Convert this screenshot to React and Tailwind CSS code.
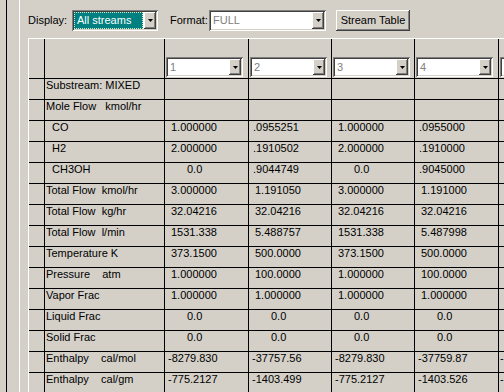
import React from 'react';

const sunken = 'shadow-[inset_1px_1px_0_#808080,inset_-1px_-1px_0_#ffffff,inset_2px_2px_0_#404040,inset_-2px_-2px_0_#d4d0c8]';
const raised = 'shadow-[inset_-1px_-1px_0_#404040,inset_1px_1px_0_#ffffff,inset_-2px_-2px_0_#808080]';

const colWidths = ['w-[84px]', 'w-[83px]', 'w-[83px]', 'w-[84px]', 'w-[84px]'];
const empty = ['', '', '', '', ''];

// last column is cut by the window edge, only the minus signs show
const rows = [
    { label: 'Substream: MIXED', vals: empty },
    { label: 'Mole Flow   kmol/hr', vals: empty },
    { label: 'CO', indent: true, vals: ['1.000000', '.0955251', '1.000000', '.0955000', ''] },
    { label: 'H2', indent: true, vals: ['2.000000', '.1910502', '2.000000', '.1910000', ''] },
    { label: 'CH3OH', indent: true, vals: ['0.0', '.9044749', '0.0', '.9045000', ''] },
    { label: 'Total Flow  kmol/hr', vals: ['3.000000', '1.191050', '3.000000', '1.191000', ''] },
    { label: 'Total Flow  kg/hr', vals: ['32.04216', '32.04216', '32.04216', '32.04216', ''] },
    { label: 'Total Flow  l/min', vals: ['1531.338', '5.488757', '1531.338', '5.487998', ''] },
    { label: 'Temperature K', vals: ['373.1500', '500.0000', '373.1500', '500.0000', ''] },
    { label: 'Pressure    atm', vals: ['1.000000', '100.0000', '1.000000', '100.0000', ''] },
    { label: 'Vapor Frac', vals: ['1.000000', '1.000000', '1.000000', '1.000000', ''] },
    { label: 'Liquid Frac', vals: ['0.0', '0.0', '0.0', '0.0', ''] },
    { label: 'Solid Frac', vals: ['0.0', '0.0', '0.0', '0.0', ''] },
    { label: 'Enthalpy    cal/mol', vals: ['-8279.830', '-37757.56', '-8279.830', '-37759.87', '-'] },
    { label: 'Enthalpy    cal/gm', vals: ['-775.2127', '-1403.499', '-775.2127', '-1403.526', '-'] },
];

function padFor(v, i) {
    if (i === 4) return 'pl-[1px]';
    if (v.startsWith('-')) return 'pl-[3px]';
    if (v.startsWith('.')) return 'pl-[4px]';
    if (v === '0.0') return 'pl-[22px]';
    return 'pl-[6px]';
}

function Arrow() {
    return (
        <svg width="5" height="3" viewBox="0 0 5 3">
            <polygon points="0,0 5,0 2.5,3" fill="#000" />
        </svg>
    );
}

function Combo({ text, width, height = 'h-[20px]', selected }) {
    return (
        <div className={`flex flex-none bg-white p-[2px] ${sunken} ${width} ${height}`}>
            <div className="flex min-w-0 flex-1 items-center">
                {selected ? (
                    <div className="flex h-full flex-1 items-center border border-dotted border-[#d8e8c0] bg-[#008080] pl-[2px] text-white">
                        {text}
                    </div>
                ) : (
                    <span className="pl-[2px] text-[#808080]">{text}</span>
                )}
            </div>
            <div className={`ml-[1px] flex w-[12px] flex-none items-center justify-center bg-[#d4d0c8] ${raised}`}>
                <Arrow />
            </div>
        </div>
    );
}

function App() {
    return (
        <div className="flex h-[392px] w-[504px] overflow-hidden bg-[#d4d0c8] font-['Liberation_Sans',Arial,sans-serif] text-[11px] leading-[13px] text-black">
            {/* splitter strip */}
            <div className="w-[28px] flex-none pl-[6px]">
                <div className="h-full w-[14px] border-l border-r border-l-black border-r-white" />
            </div>

            <div className="flex min-w-0 flex-1 flex-col">
                {/* toolbar */}
                <div className="flex h-[38px] flex-none items-start pt-[10px]">
                    <span className="w-[44px] flex-none pt-[4px]">Display:</span>
                    <Combo text="All streams" width="w-[86px]" height="h-[21px]" selected />
                    <span className="ml-[12px] w-[39px] flex-none pt-[4px]">Format:</span>
                    <Combo text="FULL" width="w-[117px]" height="h-[21px]" />
                    <button className={`ml-[10px] flex h-[21px] w-[74px] flex-none items-center justify-center bg-[#d4d0c8] ${raised}`}>
                        Stream Table
                    </button>
                </div>

                {/* grid */}
                <div className="flex-1 overflow-hidden border-l border-t border-white">
                    <div className="flex h-[40px] w-max border-b border-black">
                        <div className="w-[16px] flex-none border-r border-black" />
                        <div className="w-[120px] flex-none border-r border-black" />
                        {colWidths.map((w, i) => (
                            <div key={i} className={`flex flex-none items-end border-r border-black pb-[1px] pl-[1px] ${w}`}>
                                <Combo text={i < 4 ? String(i + 1) : ''} width="w-[77px]" />
                            </div>
                        ))}
                    </div>

                    {rows.map((r) => (
                        <div key={r.label} className="flex h-[21px] w-max border-b border-black">
                            <div className="w-[16px] flex-none border-r border-black" />
                            <div className={`w-[120px] flex-none whitespace-pre border-r border-black ${r.indent ? 'pl-[7px]' : 'pl-[1px]'}`}>
                                {r.label}
                            </div>
                            {r.vals.map((v, i) => (
                                <div key={i} className={`flex-none whitespace-pre border-r border-black ${colWidths[i]} ${padFor(v, i)}`}>
                                    {v}
                                </div>
                            ))}
                        </div>
                    ))}
                </div>
            </div>
        </div>
    );
}

export default App;
